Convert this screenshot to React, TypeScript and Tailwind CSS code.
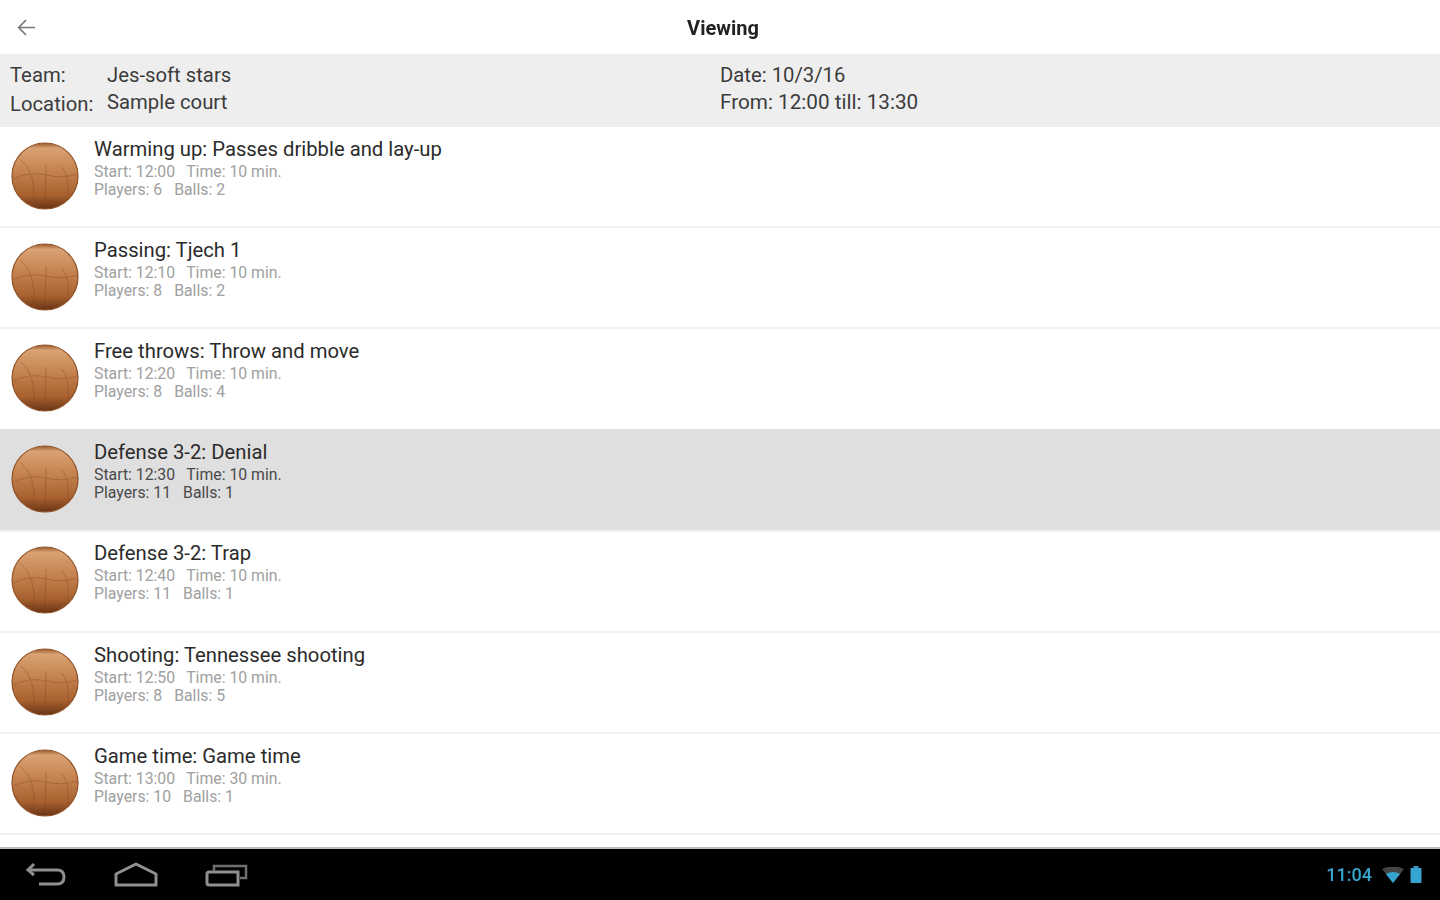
const rows = [
  { t: "Warming up: Passes dribble and lay-up", s: "Start: 12:00", d: "Time: 10 min.", p: "Players: 6", b: "Balls: 2" },
  { t: "Passing: Tjech 1", s: "Start: 12:10", d: "Time: 10 min.", p: "Players: 8", b: "Balls: 2" },
  { t: "Free throws: Throw and move", s: "Start: 12:20", d: "Time: 10 min.", p: "Players: 8", b: "Balls: 4" },
  { t: "Defense 3-2: Denial", s: "Start: 12:30", d: "Time: 10 min.", p: "Players: 11", b: "Balls: 1", active: true },
  { t: "Defense 3-2: Trap", s: "Start: 12:40", d: "Time: 10 min.", p: "Players: 11", b: "Balls: 1" },
  { t: "Shooting: Tennessee shooting", s: "Start: 12:50", d: "Time: 10 min.", p: "Players: 8", b: "Balls: 5" },
  { t: "Game time: Game time", s: "Start: 13:00", d: "Time: 30 min.", p: "Players: 10", b: "Balls: 1" },
];

function Ball({ id }: { id: number }) {
  return (
    <svg width="70" height="70" viewBox="0 0 70 70" className="shrink-0">
      <defs>
        <linearGradient id={`g${id}`} x1="0" y1="0" x2="0" y2="1">
          <stop offset="0" stopColor="#9c5a2a" />
          <stop offset="0.08" stopColor="#d9a274" />
          <stop offset="0.42" stopColor="#c5834f" />
          <stop offset="0.78" stopColor="#a9622f" />
          <stop offset="1" stopColor="#6a3315" />
        </linearGradient>
      </defs>
      <circle cx="35" cy="35" r="33" fill={`url(#g${id})`} stroke="#8f5227" strokeWidth="1.2" />
      <g fill="none" stroke="#7d431c" strokeWidth="0.9" opacity="0.4">
        <path d="M3 38 Q20 30 36 34 Q52 38 67 33" />
        <path d="M36 24 L35 67" />
        <path d="M10 18 Q26 30 24 62" />
        <path d="M52 26 Q60 36 58 56" />
      </g>
    </svg>
  );
}

export default function App() {
  return (
    <div className="w-[1440px] h-[900px] flex flex-col bg-white overflow-hidden font-['Roboto',sans-serif]">
      <div className="flex-1 min-h-0 flex flex-col [filter:blur(0.7px)]">
        <header className="h-[54px] shrink-0 relative flex items-center justify-center pl-[6px]">
          <svg className="absolute left-[16px] top-[17px]" width="21" height="21" viewBox="0 0 21 21" fill="none" stroke="#777" strokeWidth="1.7">
            <path d="M19 10.5H3M10 3l-7.3 7.5L10 18" />
          </svg>
          <span className="text-[20px] font-bold text-[#222] translate-y-[1px]">Viewing</span>
        </header>
        <section className="h-[73px] shrink-0 bg-[#eeeeee] flex pl-[10px] pt-[8px] text-[20.3px] text-[#3c3c3c] leading-[27px]">
          <div className="w-[710px] grid grid-cols-[97px_1fr] self-start">
            <span>Team:</span>
            <span>Jes-soft stars</span>
            <span className="translate-y-[2px]">Location:</span>
            <span>Sample court</span>
          </div>
          <div>
            <div>Date: 10/3/16</div>
            <div className="text-[20.7px]">From: 12:00 till: 13:30</div>
          </div>
        </section>
        <ul className="flex flex-col">
          {rows.map((r, i) => (
            <li
              key={i}
              className={`shrink-0 relative flex items-center pl-[10px] border-b-2 border-[#f0f0f0] ${r.active ? "h-[103.2px] -mt-[2px] pt-[2px] pb-[2px] bg-[#dfdfdf]" : "h-[101.2px] pb-[2px] bg-white"}`}
            >
              <Ball id={i} />
              <div className="ml-[14px] flex flex-col -translate-y-[10px]">
                <div className="text-[20.25px] leading-[30px] text-[#2b2b2b] translate-y-[1px]">{r.t}</div>
                <div className={`text-[15.8px] leading-[18px] ${r.active ? "text-[#4a4a4a]" : "text-[#a0a0a0]"}`}>
                  <span>{r.s}</span>
                  <span className="ml-[11px]">{r.d}</span>
                </div>
                <div className={`text-[15.8px] leading-[18px] ${r.active ? "text-[#4a4a4a]" : "text-[#a0a0a0]"}`}>
                  <span>{r.p}</span>
                  <span className="ml-[12px]">{r.b}</span>
                </div>
              </div>
            </li>
          ))}
        </ul>
      </div>
      <footer className="h-[53px] shrink-0 bg-black border-t-2 border-[#bdbdbd] flex items-center pl-[25px] pr-[18px] [filter:blur(0.7px)]">
        <svg width="42" height="26" viewBox="0 0 42 26" fill="none" stroke="#8f8f8f" strokeWidth="3">
          <path d="M9 2 L3 8 L9 13" />
          <path d="M3 8 H32 Q39 8 39 15 Q39 22 32 22 H14" />
        </svg>
        <svg className="ml-[47px]" width="44" height="26" viewBox="0 0 44 26" fill="none" stroke="#8f8f8f" strokeWidth="3">
          <path d="M2 12 L22 2 L42 12 V23 H2 Z" strokeLinejoin="round" />
        </svg>
        <svg className="ml-[47px]" width="44" height="26" viewBox="0 0 44 26" fill="none" stroke="#8f8f8f" strokeWidth="3">
          <path d="M2 12 Q2 10 4 10 H33 V23 H4 Q2 23 2 21 Z" />
          <path d="M9 9 V4 H41 V16 H35" strokeWidth="2.5" stroke="#6f6f6f" />
        </svg>
        <div className="ml-auto flex items-center">
          <span className="text-[18px] font-medium text-[#35a5d0]">11:04</span>
          <svg className="ml-[10px]" width="22" height="16" viewBox="0 0 22 16">
            <path d="M0 2 Q11 -3 22 2 L11 16 Z" fill="#444" />
            <path d="M4 7 Q11 3 18 7 L11 16 Z" fill="#35a5d0" />
          </svg>
          <svg className="ml-[6px]" width="12" height="17" viewBox="0 0 12 17">
            <rect x="3.5" y="0" width="5" height="2" fill="#2f8fb5" />
            <rect x="0.5" y="2" width="11" height="15" rx="1" fill="#35a5d0" />
          </svg>
        </div>
      </footer>
    </div>
  );
}
